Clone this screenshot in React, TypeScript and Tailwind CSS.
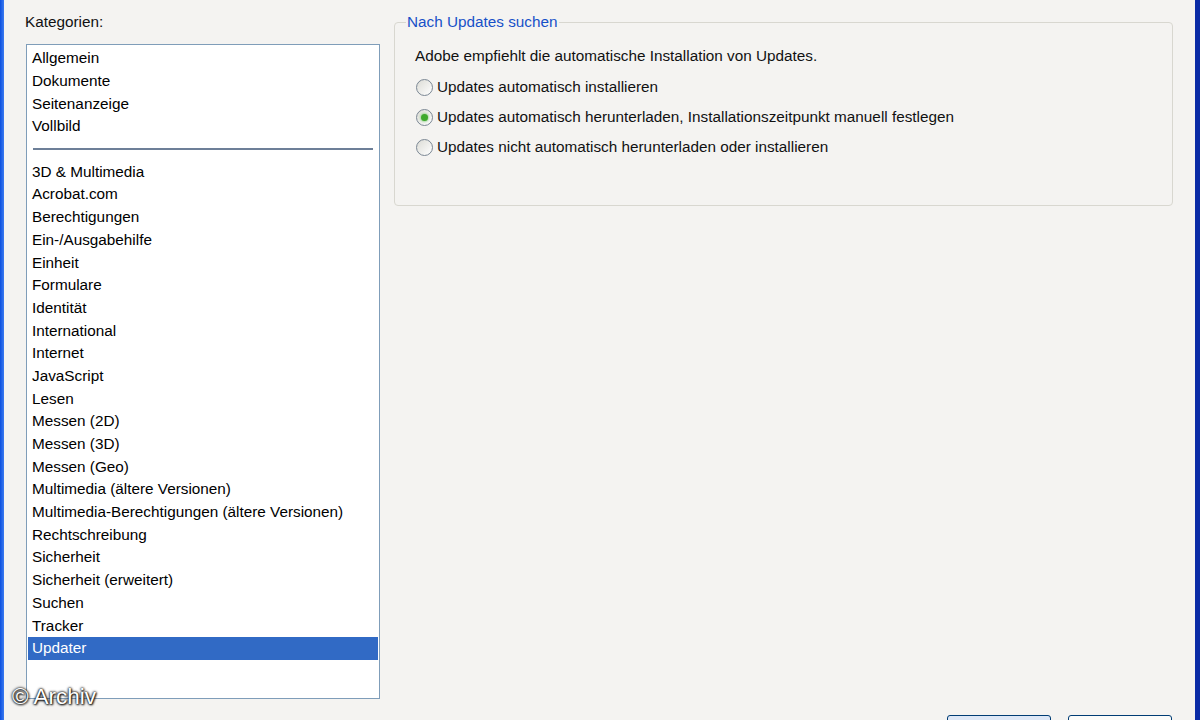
import React from "react";

const top = ["Allgemein", "Dokumente", "Seitenanzeige", "Vollbild"];
const rest = [
  "3D & Multimedia",
  "Acrobat.com",
  "Berechtigungen",
  "Ein-/Ausgabehilfe",
  "Einheit",
  "Formulare",
  "Identität",
  "International",
  "Internet",
  "JavaScript",
  "Lesen",
  "Messen (2D)",
  "Messen (3D)",
  "Messen (Geo)",
  "Multimedia (ältere Versionen)",
  "Multimedia-Berechtigungen (ältere Versionen)",
  "Rechtschreibung",
  "Sicherheit",
  "Sicherheit (erweitert)",
  "Suchen",
  "Tracker",
  "Updater",
];

function Row({ label, selected }: { label: string; selected?: boolean }) {
  return (
    <div
      className={`mx-[1px] flex h-[22.7px] items-center pl-[4px] ${
        selected ? "bg-[#316ac5] text-white" : "text-black"
      }`}
    >
      {label}
    </div>
  );
}

function Radio({ checked, label }: { checked?: boolean; label: string }) {
  return (
    <div className="flex h-[30px] items-center">
      <span className="ml-[1px] flex h-[17px] w-[17px] items-center justify-center rounded-full border border-[#7b8794] bg-gradient-to-br from-[#dcdcd6] to-white">
        {checked && (
          <span className="h-[7px] w-[7px] rounded-full bg-[#3ea92c] shadow-[0_0_2px_1px_rgba(120,200,110,0.6)]" />
        )}
      </span>
      <span className="ml-[4px] text-[#111]">{label}</span>
    </div>
  );
}

export default function App() {
  return (
    <div
      className="relative flex h-[720px] w-[1200px] overflow-hidden bg-[#f4f3f1] text-[15.3px] leading-[18px]"
      style={{ fontFamily: '"Liberation Sans", Arial, sans-serif' }}
    >
      <div className="w-[4px] shrink-0 bg-gradient-to-r from-[#0a4fdf] to-[#3a7af0]" />

      <div className="flex flex-1 flex-col pt-[13px]">
        <div className="flex">
          <div className="ml-[22px] flex flex-col">
            <div className="-ml-[1px] h-[18px] text-[#111]">Kategorien:</div>
            <div className="mt-[13px] h-[655px] w-[354px] border border-[#7f9db9] bg-white pt-[2px]">
              {top.map((t) => (
                <Row key={t} label={t} />
              ))}
              <div className="flex h-[22.7px] items-center px-[6px]">
                <div className="h-[2px] w-full bg-[#6d7f98]" />
              </div>
              {rest.map((t) => (
                <Row key={t} label={t} selected={t === "Updater"} />
              ))}
            </div>
          </div>

          <div className="ml-[14px] flex-1 pr-[22px]">
            <fieldset className="h-[193px] rounded-[4px] border border-[#d8d7d0] px-0">
              <legend className="ml-[11px] px-[1px] text-[#1750c8]">Nach Updates suchen</legend>
              <div className="pl-[20px] pt-[16px]">
                <div className="text-[#111]">Adobe empfiehlt die automatische Installation von Updates.</div>
                <div className="mt-[7px]">
                  <Radio label="Updates automatisch installieren" />
                  <Radio checked label="Updates automatisch herunterladen, Installationszeitpunkt manuell festlegen" />
                  <Radio label="Updates nicht automatisch herunterladen oder installieren" />
                </div>
              </div>
            </fieldset>
          </div>
        </div>

        <div className="mt-[16px] flex justify-end gap-[17px] pr-[23px]">
          <div className="h-[24px] w-[104px] rounded-[3px] border border-[#003c74] bg-[#dde7f6]" />
          <div className="h-[24px] w-[104px] rounded-[3px] border border-[#003c74] bg-[#fbfbf9]" />
        </div>
      </div>

      <div className="w-[5px] shrink-0 bg-[#0a2ba6]" />

      <div className="absolute left-[12px] top-[684px] text-[22.5px] leading-[26px] text-white [text-shadow:0_0_3px_#000,0_0_2px_#000,1px_1px_2px_#333]">
        © Archiv
      </div>
    </div>
  );
}
